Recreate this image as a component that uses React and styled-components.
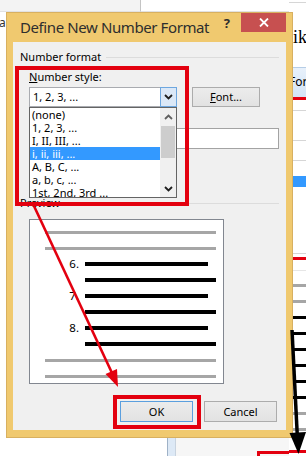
import React from "react";
import styled, { createGlobalStyle } from "styled-components";

const GlobalStyle = createGlobalStyle`
  html, body { margin: 0; padding: 0; }
  body { width: 306px; height: 456px; overflow: hidden; background: #fff; }
  * { box-sizing: border-box; }
`;

const ui = `"Noto Sans", "Segoe UI", sans-serif`;

const Desktop = styled.div`
  position: relative;
  width: 306px;
  height: 456px;
  overflow: hidden;
  background: #fff;
  font-family: ${ui};
  font-size: 11px;
  color: #000;
`;

/* ---------- window behind the dialog ---------- */

const BackWindow = styled.div`
  display: flex;
  height: 100%;
`;

const BackMain = styled.div`
  flex: 1;
  display: flex;
  flex-direction: column;
`;

const BackTop = styled.div`
  height: 12px;
  display: flex;
`;

const BackPane = styled.div`
  width: ${(p) => p.$w || "auto"};
  flex: ${(p) => (p.$w ? "none" : 1)};
  background: ${(p) => p.$bg || "#fff"};
  border-right: ${(p) => (p.$divider ? "1px solid #c4c4c4" : "none")};
  border-bottom: ${(p) => (p.$flat ? "none" : "1px solid #e2e2e2")};
`;

const BackWord = styled.div`
  margin: 4px 0 0 -1px;
  font-size: 12px;
  line-height: 14px;
  color: #333;
`;

const BackBottom = styled.div`
  margin-top: auto;
  height: 18px;
  display: flex;
`;

const ScrollEdge = styled.div`
  width: 9px;
  background: #dde9f6;
  border-left: 1px solid #9fb2c7;
  border-right: 1px solid #c8d3df;
`;

const BackFill = styled.div`
  flex: 1;
  background: #f6f6f6;
  display: flex;
`;

const BackRedFrame = styled.div`
  margin: 13px 0 0 81px;
  flex: 1;
  border-top: 3px solid #e3000f;
  border-left: 3px solid #e3000f;
`;

const BackColumn = styled.div`
  width: 17px;
  display: flex;
  flex-direction: column;
  background: #fff;
`;

const Rule = styled.div`
  flex: none;
  margin-top: ${(p) => p.$mt}px;
  height: ${(p) => p.$h || 1}px;
  background: ${(p) => p.$c || "#d6d6d6"};
`;

const BackText = styled.div`
  margin-top: 24px;
  height: 20px;
  font-family: "Liberation Serif", serif;
  font-size: 18px;
  line-height: 20px;
  white-space: nowrap;
  margin-left: -1px;
`;

const BackTab = styled.div`
  margin-top: 20px;
  height: 30px;
  background: linear-gradient(#e8f1fb, #d3e4f6);
  border-top: 1px solid #b6cde6;
  font-size: 12px;
  line-height: 28px;
  white-space: nowrap;
`;

/* ---------- dialog ---------- */

const Dialog = styled.div`
  position: absolute;
  left: 6px;
  top: 12px;
  width: 287px;
  height: 426px;
  background: #f0c96f;
  border: 1px solid #d8b060;
  padding: 0 6px 7px 6px;
  display: flex;
  flex-direction: column;
`;

const TitleBar = styled.div`
  height: 29px;
  display: flex;
  align-items: flex-start;
`;

const Title = styled.div`
  margin: 4px 0 0 7px;
  font-size: 15px;
  line-height: 20px;
  letter-spacing: -0.4px;
  color: #2e2e2e;
  white-space: nowrap;
`;

const Help = styled.div`
  margin: 0 11px 0 auto;
  font-size: 13px;
  font-weight: 700;
  line-height: 20px;
  color: #2e2e2e;
`;

const CloseBox = styled.div`
  width: 45px;
  height: 19px;
  background: #c75050;
  display: flex;
  align-items: center;
  justify-content: center;
`;

const Client = styled.div`
  flex: 1;
  background: #f0f0f0;
  padding: 8px 7px;
  display: flex;
  flex-direction: column;
`;

const GroupHeader = styled.div`
  margin-top: ${(p) => p.$mt || 0}px;
  height: 14px;
  display: flex;
  align-items: center;
  gap: 5px;
  line-height: 14px;
  white-space: nowrap;
  &::after {
    content: "";
    flex: 1;
    height: 1px;
    background: #dcdcdc;
  }
`;

const Body = styled.div`
  padding-left: 9px;
  display: flex;
  flex-direction: column;
`;

const Label = styled.div`
  margin-top: ${(p) => p.$mt}px;
  height: 14px;
  line-height: 14px;
`;

const Key = styled.span`
  text-decoration: underline;
`;

const ComboRow = styled.div`
  margin-top: 3px;
  height: 20px;
  display: flex;
  gap: 15px;
`;

const Combo = styled.div`
  position: relative;
  width: 148px;
  height: 20px;
  background: #fff;
  border: 1px solid #a9abb0;
  display: flex;
`;

const ComboText = styled.div`
  flex: 1;
  padding-left: 3px;
  line-height: 18px;
`;

const DropButton = styled.div`
  width: 17px;
  margin: -1px -1px -1px 0;
  background: #dbe8f7;
  border: 1px solid #6ea7df;
  display: flex;
  align-items: center;
  justify-content: center;
`;

const List = styled.div`
  position: absolute;
  left: -1px;
  top: 19px;
  width: 148px;
  height: 91px;
  background: #fff;
  border: 1px solid #646464;
  display: flex;
  z-index: 2;
`;

const Items = styled.div`
  flex: 1;
  overflow: hidden;
`;

const Item = styled.div`
  height: 13px;
  line-height: 13px;
  padding-left: 2px;
  white-space: nowrap;
  background: ${(p) => (p.$selected ? "#3399ff" : "transparent")};
  color: ${(p) => (p.$selected ? "#fff" : "#000")};
`;

const ScrollTrack = styled.div`
  width: 16px;
  background: #f0f0f0;
  display: flex;
  flex-direction: column;
`;

const ScrollArrow = styled.div`
  height: 17px;
  display: flex;
  align-items: center;
  justify-content: center;
  margin-top: ${(p) => (p.$bottom ? "auto" : "0")};
`;

const Thumb = styled.div`
  margin: 1px 1px 0;
  height: 32px;
  background: #cdcdcd;
`;

const Button = styled.div`
  width: ${(p) => p.$w || 73}px;
  height: ${(p) => p.$h || 21}px;
  background: linear-gradient(#ececec, #e2e2e2);
  border: 1px solid ${(p) => (p.$default ? "#5b9fde" : "#acacac")};
  display: flex;
  align-items: center;
  justify-content: center;
  line-height: 14px;
`;

const TextBox = styled.div`
  margin-top: ${(p) => p.$mt}px;
  width: 250px;
  height: 21px;
  background: #fff;
  border: 1px solid #a3a3a3;
`;

const PreviewBox = styled.div`
  margin-top: 9px;
  width: 195px;
  height: 165px;
  background: #fff;
  border: 1px solid #828790;
  padding-top: 10px;
  display: flex;
  flex-direction: column;
  gap: 12px;
`;

const PreviewRow = styled.div`
  height: 4px;
  display: flex;
  align-items: center;
`;

const Num = styled.div`
  width: 49px;
  text-align: right;
  font-size: 11.5px;
  line-height: 4px;
`;

const Bar = styled.div`
  flex: 1;
  height: ${(p) => (p.$grey ? 3 : 4)}px;
  margin: 0 ${(p) => p.$right}px 0 ${(p) => p.$left}px;
  background: ${(p) => (p.$grey ? "#a6a6a6" : "#000")};
`;

const ButtonRow = styled.div`
  margin-top: 17px;
  padding-right: 2px;
  display: flex;
  justify-content: flex-end;
  gap: 11px;
`;

/* ---------- annotations ---------- */

const RedFrame = styled.div`
  position: absolute;
  left: ${(p) => p.$x}px;
  top: ${(p) => p.$y}px;
  width: ${(p) => p.$w}px;
  height: ${(p) => p.$h}px;
  border: 4px solid #e3000f;
  z-index: 5;
`;

const Arrows = styled.svg`
  position: absolute;
  left: 0;
  top: 0;
  z-index: 6;
  pointer-events: none;
`;

const Chevron = ({ up }) => (
  <svg width="9" height="6" viewBox="0 0 9 6">
    <path
      d={up ? "M1 5 L4.5 1.5 L8 5" : "M1 1 L4.5 4.5 L8 1"}
      fill="none"
      stroke={up ? "#606060" : "#1e1e1e"}
      strokeWidth="1.8"
    />
  </svg>
);

const styles = [
  "(none)",
  "1, 2, 3, ...",
  "I, II, III, ...",
  "i, ii, iii, ...",
  "A, B, C, ...",
  "a, b, c, ...",
  "1st, 2nd, 3rd ...",
];

const previewRows = [
  { grey: true },
  { grey: true },
  { num: "6." },
  { cont: true },
  { num: "7." },
  { cont: true },
  { num: "8." },
  { cont: true },
  { grey: true },
  { grey: true },
];

const backRules = [
  { h: 3, c: "#a6a6a6" },
  { h: 3, c: "#a6a6a6" },
  { h: 3, c: "#000" },
  { h: 3, c: "#000" },
  { h: 3, c: "#000" },
  { h: 3, c: "#000" },
  { h: 3, c: "#000" },
  { h: 3, c: "#000" },
  { h: 3, c: "#a6a6a6" },
  { h: 3, c: "#a6a6a6" },
];

export default function App() {
  return (
    <Desktop>
      <GlobalStyle />
      <BackWindow>
        <BackMain>
          <BackTop>
            <BackPane $w="141px" $bg="#f3f3f3" $divider />
            <BackPane />
          </BackTop>
          <BackWord>ar</BackWord>
          <BackBottom>
            <BackPane $w="167px" $flat />
            <ScrollEdge />
            <BackFill>
              <BackRedFrame />
            </BackFill>
          </BackBottom>
        </BackMain>
        <BackColumn>
          <Rule $mt={2} />
          <BackText>lik</BackText>
          <BackTab>For</BackTab>
          <Rule $mt={0} $h={3} $c="#e3000f" />
          <Rule $mt={10} />
          <Rule $mt={29} />
          <Rule $mt={19} />
          <Rule $mt={15} $h={11} $c="#3399ff" />
          <Rule $mt={66} />
          <Rule $mt={3} $h={3} $c="#e3000f" />
          <Rule $mt={10} $c="#e6e6e6" />
          {backRules.map((r, i) => (
            <Rule key={i} $mt={13} $h={r.h} $c={r.c} />
          ))}
          <Rule $mt={19} $h={3} $c="#e3000f" />
        </BackColumn>
      </BackWindow>

      <Dialog>
        <TitleBar>
          <Title>Define New Number Format</Title>
          <Help>?</Help>
          <CloseBox>
            <svg width="10" height="9" viewBox="0 0 10 9">
              <path d="M1 0.5 L9 8.5 M9 0.5 L1 8.5" stroke="#fff" strokeWidth="1.8" />
            </svg>
          </CloseBox>
        </TitleBar>
        <Client>
          <GroupHeader>Number format</GroupHeader>
          <Body>
            <Label $mt={6}>
              <Key>N</Key>umber style:
            </Label>
            <ComboRow>
              <Combo>
                <ComboText>1, 2, 3, ...</ComboText>
                <DropButton>
                  <Chevron />
                </DropButton>
                <List>
                  <Items>
                    {styles.map((s, i) => (
                      <Item key={s} $selected={i === 3}>
                        {s}
                      </Item>
                    ))}
                  </Items>
                  <ScrollTrack>
                    <ScrollArrow>
                      <Chevron up />
                    </ScrollArrow>
                    <Thumb />
                    <ScrollArrow $bottom>
                      <Chevron />
                    </ScrollArrow>
                  </ScrollTrack>
                </List>
              </Combo>
              <Button $w={68} $h={20}>
                <span>
                  <Key>F</Key>ont...
                </span>
              </Button>
            </ComboRow>
            <TextBox $mt={21} />
          </Body>
          <GroupHeader $mt={47}>Preview</GroupHeader>
          <Body>
            <PreviewBox>
              {previewRows.map((r, i) => (
                <PreviewRow key={i}>
                  {r.grey ? (
                    <Bar $grey $left={15} $right={7} />
                  ) : (
                    <>
                      <Num>{r.num || ""}</Num>
                      <Bar $left={6} $right={r.cont ? 7 : 15} />
                    </>
                  )}
                </PreviewRow>
              ))}
            </PreviewBox>
          </Body>
          <ButtonRow>
            <Button $default>OK</Button>
            <Button>Cancel</Button>
          </ButtonRow>
        </Client>
      </Dialog>

      <RedFrame $x={15} $y={66} $w={174} $h={140} />
      <RedFrame $x={113} $y={395} $w={88} $h={34} />

      <Arrows width="306" height="456" viewBox="0 0 306 456">
        <line x1="34" y1="206" x2="112" y2="373" stroke="#e3000f" strokeWidth="2.6" />
        <polygon points="118,387 105.5,374 117,369" fill="#e3000f" />
        <line x1="292" y1="330" x2="297.5" y2="440" stroke="#000" strokeWidth="3.5" />
        <polygon points="289.5,433 306,432 298.5,454" fill="#000" />
      </Arrows>
    </Desktop>
  );
}
